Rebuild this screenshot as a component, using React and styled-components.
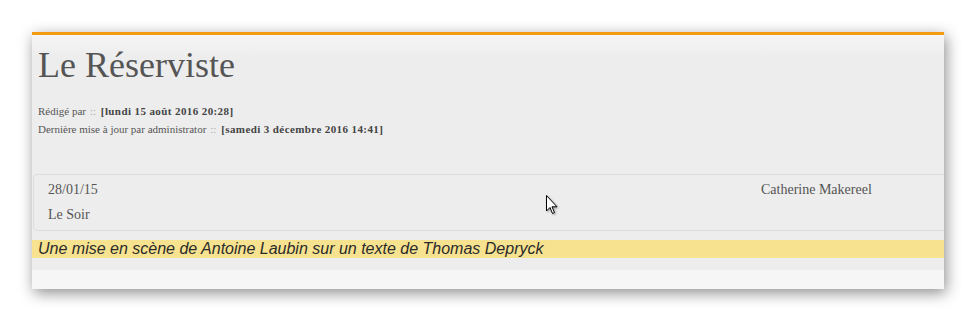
import React from "react";
import styled, { createGlobalStyle } from "styled-components";

const GlobalStyle = createGlobalStyle`
  html, body {
    margin: 0;
    padding: 0;
    background: #ffffff;
  }
  body {
    font-family: "Liberation Serif", "Times New Roman", serif;
  }
`;

const Stage = styled.div`
  position: relative;
  width: 976px;
  height: 321px;
  padding: 32px 0 0 32px;
  box-sizing: border-box;
  overflow: hidden;
`;

const Window = styled.div`
  width: 912px;
  height: 257px;
  border-top: 3px solid #f39c12;
  box-sizing: border-box;
  background: linear-gradient(#f5f5f5 0px, #ededed 22px);
  box-shadow: 2px 4px 14px rgba(0, 0, 0, 0.45);
  display: flex;
  flex-direction: column;
  overflow: hidden;
`;

const Header = styled.div`
  padding: 8px 0 0 6px;
  height: 139px;
  box-sizing: border-box;
`;

const Title = styled.h1`
  margin: 0;
  font-family: "Liberation Serif", "Times New Roman", serif;
  font-weight: normal;
  font-size: 36px;
  line-height: 44px;
  color: #555555;
`;

const Meta = styled.div`
  margin-top: 15px;
  font-size: 11px;
  line-height: 18px;
  color: #555555;
  b {
    font-weight: bold;
    letter-spacing: 0.4px;
    color: #444444;
  }
`;

const Sep = styled.span`
  color: #a8a8a8;
  margin: 0 2px 0 4px;
`;

const Card = styled.div`
  margin-left: 1px;
  margin-right: -10px;
  height: 57px;
  box-sizing: border-box;
  border: 1px solid #dcdcdc;
  border-radius: 4px 0 0 4px;
  padding: 7px 0 0 14px;
  display: flex;
  flex-direction: column;
  gap: 10px;
  font-size: 14px;
  line-height: 15px;
  color: #555555;
`;

const CardRow = styled.div`
  display: flex;
  align-items: baseline;
`;

const CardCell = styled.span`
  width: ${(p) => p.width || "auto"};
`;

const Quote = styled.div`
  margin-top: 9px;
  height: 18px;
  background: #f7e38f;
  padding-left: 6px;
  font-family: "Liberation Sans", Arial, sans-serif;
  font-style: italic;
  font-size: 16px;
  line-height: 18px;
  color: #2b2b2b;
`;

const Spacer = styled.div`
  height: 12px;
`;

const Footer = styled.div`
  flex: 1;
  background: #f6f6f6;
`;

const Cursor = styled.svg`
  position: absolute;
  left: 546px;
  top: 195px;
  filter: drop-shadow(1px 1px 1px rgba(0, 0, 0, 0.35));
`;

export default function App() {
  return (
    <>
      <GlobalStyle />
      <Stage>
        <Window>
          <Header>
            <Title>Le Réserviste</Title>
            <Meta>
              <div>
                Rédigé par<Sep>::</Sep> <b>[lundi 15 août 2016 20:28]</b>
              </div>
              <div>
                Dernière mise à jour par administrator<Sep>::</Sep>{" "}
                <b>[samedi 3 décembre 2016 14:41]</b>
              </div>
            </Meta>
          </Header>
          <Card>
            <CardRow>
              <CardCell width="713px">28/01/15</CardCell>
              <CardCell>Catherine Makereel</CardCell>
            </CardRow>
            <CardRow>
              <CardCell>Le Soir</CardCell>
            </CardRow>
          </Card>
          <Quote>Une mise en scène de Antoine Laubin sur un texte de Thomas Depryck</Quote>
          <Spacer />
          <Footer />
        </Window>
        <Cursor width="12" height="20" viewBox="0 0 12 20">
          <path
            d="M0.5 0.5 L0.5 16 L4 12.5 L6.5 18.5 L8.5 17.6 L6 11.8 L11 11.8 Z"
            fill="#ffffff"
            stroke="#000000"
            strokeWidth="1"
            strokeLinejoin="miter"
          />
        </Cursor>
      </Stage>
    </>
  );
}
